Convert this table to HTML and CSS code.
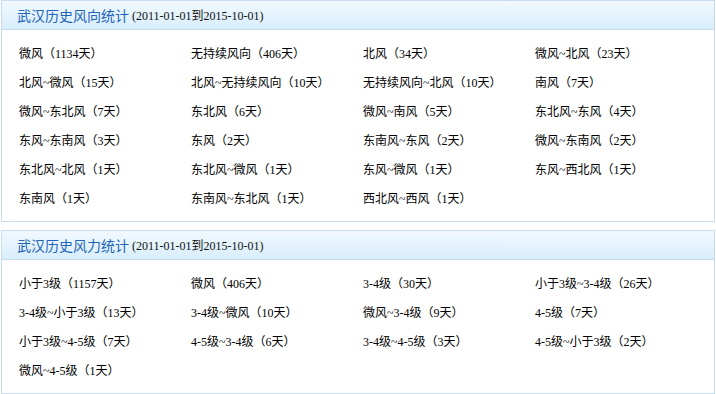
FILE: index.html
```html
<!DOCTYPE html>
<html lang="zh">
<head>
<meta charset="utf-8">
<link rel="stylesheet" href="styles.css">
</head>
<body>
<div class="page">
  <section class="box">
    <div class="box-head"><span class="title">武汉历史风向统计</span><span class="range">(2011-01-01到2015-10-01)</span></div>
    <div class="grid">
      <div class="item">微风（1134天）</div>
      <div class="item">无持续风向（406天）</div>
      <div class="item">北风（34天）</div>
      <div class="item">微风~北风（23天）</div>
      <div class="item">北风~微风（15天）</div>
      <div class="item">北风~无持续风向（10天）</div>
      <div class="item">无持续风向~北风（10天）</div>
      <div class="item">南风（7天）</div>
      <div class="item">微风~东北风（7天）</div>
      <div class="item">东北风（6天）</div>
      <div class="item">微风~南风（5天）</div>
      <div class="item">东北风~东风（4天）</div>
      <div class="item">东风~东南风（3天）</div>
      <div class="item">东风（2天）</div>
      <div class="item">东南风~东风（2天）</div>
      <div class="item">微风~东南风（2天）</div>
      <div class="item">东北风~北风（1天）</div>
      <div class="item">东北风~微风（1天）</div>
      <div class="item">东风~微风（1天）</div>
      <div class="item">东风~西北风（1天）</div>
      <div class="item">东南风（1天）</div>
      <div class="item">东南风~东北风（1天）</div>
      <div class="item">西北风~西风（1天）</div>
    </div>
  </section>
  <section class="box">
    <div class="box-head"><span class="title">武汉历史风力统计</span><span class="range">(2011-01-01到2015-10-01)</span></div>
    <div class="grid">
      <div class="item">小于3级（1157天）</div>
      <div class="item">微风（406天）</div>
      <div class="item">3-4级（30天）</div>
      <div class="item">小于3级~3-4级（26天）</div>
      <div class="item">3-4级~小于3级（13天）</div>
      <div class="item">3-4级~微风（10天）</div>
      <div class="item">微风~3-4级（9天）</div>
      <div class="item">4-5级（7天）</div>
      <div class="item">小于3级~4-5级（7天）</div>
      <div class="item">4-5级~3-4级（6天）</div>
      <div class="item">3-4级~4-5级（3天）</div>
      <div class="item">4-5级~小于3级（2天）</div>
      <div class="item">微风~4-5级（1天）</div>
    </div>
  </section>
</div>
</body>
</html>
```
FILE: styles.css
```css
html, body {
  margin: 0;
  padding: 0;
  background: #ffffff;
}
.page {
  padding: 0 0 0 1px;
  display: flex;
  flex-direction: column;
  gap: 8px;
  font-family: "Liberation Serif", "Noto Sans CJK SC", serif;
  color: #000;
}
.box {
  width: 714px;
  box-sizing: border-box;
  border: 1px solid #c7dcef;
}
.box-head {
  height: 28px;
  border-bottom: 1px solid #c7dcef;
  background: linear-gradient(#f2f9fe, #d8eefc);
  display: flex;
  align-items: center;
  padding-left: 15px;
}
.title {
  font-family: "Noto Sans CJK SC", sans-serif;
  font-size: 14px;
  color: #2165b8;
  margin-right: 3px;
}
.range {
  font-size: 12px;
  color: #111;
}
.grid {
  display: grid;
  grid-template-columns: repeat(4, 172px);
  grid-auto-rows: 29px;
  padding: 8px 17px 9px 17px;
}
.item {
  font-size: 12px;
  display: flex;
  align-items: center;
  white-space: nowrap;
}
```
